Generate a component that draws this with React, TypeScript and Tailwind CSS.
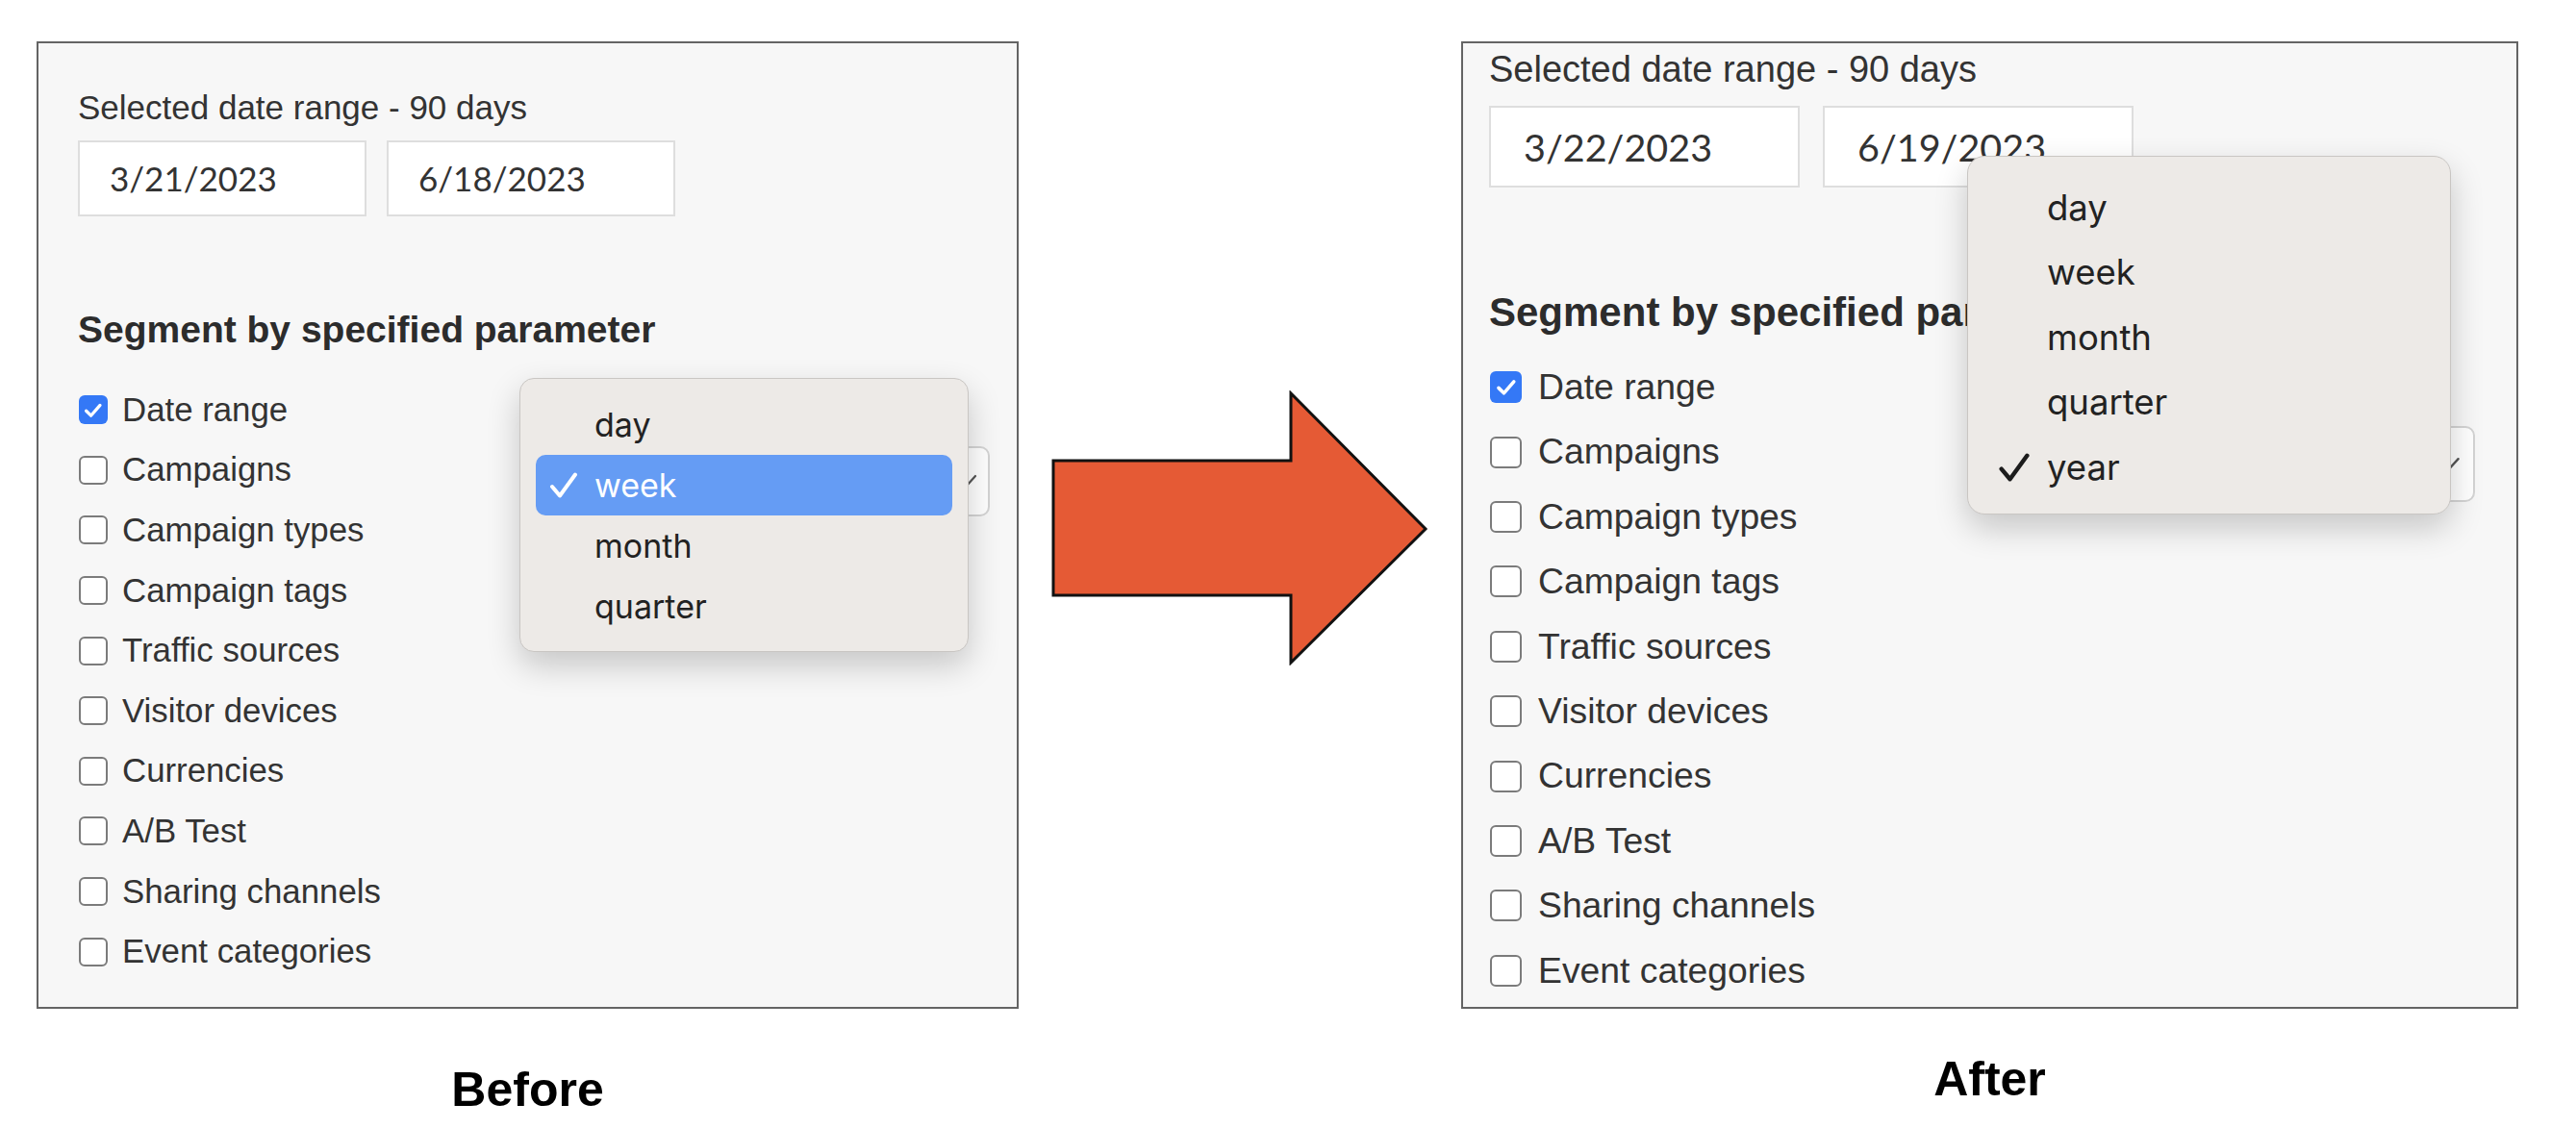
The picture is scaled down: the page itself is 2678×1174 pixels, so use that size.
import React from 'react';

type Variant = 'before' | 'after';

const PARAMS = [
  'Date range',
  'Campaigns',
  'Campaign types',
  'Campaign tags',
  'Traffic sources',
  'Visitor devices',
  'Currencies',
  'A/B Test',
  'Sharing channels',
  'Event categories',
];

// the two screenshots were taken at slightly different scales
const sizes = {
  before: {
    panel: 'w-[1021px] h-[1006px] pt-[49px] pl-[41px] pr-[28px]',
    caption: 'text-[35px]',
    dates: 'mt-[17px] gap-[21px]',
    dateBox: 'w-[300px] h-[79px] pl-[31px] text-[35px]',
    heading: 'mt-[98px] text-[39px]',
    list: 'mt-[33px]',
    row: 'h-[62.6px] gap-[15px] text-[34.8px]',
    box: 'w-[30px] h-[30px] ml-[1px]',
    select: 'mt-[69px] w-[420px] h-[73px]',
    chevron: 'mr-[11px] w-[22px] h-[15px]',
    menu: 'left-[500px] top-[348px] w-[467px] pt-[16px] pb-[15px] px-[16px] rounded-[15px]',
    item: 'h-[63px] pl-[14px] text-[34px] rounded-[10px]',
    tick: 'w-[47px]',
    tickSvg: 'w-[30px] h-[27px]',
  },
  after: {
    panel: 'w-[1099px] h-[1006px] pt-[8px] pl-[27px] pr-[43px]',
    caption: 'text-[38px]',
    dates: 'mt-[19px] gap-[24px]',
    dateBox: 'w-[323px] h-[85px] pl-[34px] text-[39.5px]',
    heading: 'mt-[109px] text-[42px]',
    list: 'mt-[23px]',
    row: 'h-[67.4px] gap-[17px] text-[37.3px]',
    box: 'w-[33px] h-[33px] ml-[1px]',
    select: 'mt-[74px] w-[440px] h-[79px]',
    chevron: 'mr-[13px] w-[24px] h-[16px]',
    menu: 'left-[524px] top-[117px] w-[503px] pt-[19px] pb-[14px] px-[17px] rounded-[18px]',
    item: 'h-[67.5px] pl-[14px] text-[36.5px] rounded-[10px]',
    tick: 'w-[51px]',
    tickSvg: 'w-[34px] h-[30px]',
  },
};

const CheckBox = ({ checked, className }: { checked: boolean; className: string }) =>
  checked ? (
    <span className={`${className} shrink-0 flex items-center justify-center rounded-[6px] bg-[#3478f6]`}>
      <svg viewBox="0 0 24 24" className="w-[72%] h-[72%]">
        <polyline points="4,12.5 9.5,18 20,6" fill="none" stroke="#fff" strokeWidth="3.6" strokeLinecap="round" strokeLinejoin="round" />
      </svg>
    </span>
  ) : (
    <span className={`${className} shrink-0 rounded-[6px] border-2 border-[#7b7b7b] bg-white`} />
  );

const Tick = ({ className, color }: { className: string; color: string }) => (
  <svg viewBox="0 0 30 27" className={className}>
    <polyline points="3,15 11,24.5 27,2.5" fill="none" stroke={color} strokeWidth="4" strokeLinecap="round" strokeLinejoin="round" />
  </svg>
);

interface PanelProps {
  variant: Variant;
  from: string;
  to: string;
  periods: string[];
  selected: string;
  highlight: boolean;
}

const Panel: React.FC<PanelProps> = ({ variant, from, to, periods, selected, highlight }) => {
  const s = sizes[variant];
  return (
    <div className={`relative shrink-0 border-2 border-[#646464] bg-[#f7f7f7] font-['Liberation_Sans',Arial,sans-serif] text-[#333] ${s.panel}`}>
      <p className={`leading-none ${s.caption}`}>Selected date range - 90 days</p>

      <div className={`flex ${s.dates}`}>
        {[from, to].map((d) => (
          <div key={d} className={`flex items-center border-2 border-[#dedede] bg-white font-['Lato',sans-serif] text-[#333] leading-none ${s.dateBox}`}>
            {d}
          </div>
        ))}
      </div>

      <h3 className={`font-bold leading-none text-[#2c2c2c] ${s.heading}`}>Segment by specified parameter</h3>

      <div className={`flex justify-between ${s.list}`}>
        <ul>
          {PARAMS.map((p, i) => (
            <li key={p} className={`flex items-center leading-none ${s.row}`}>
              <CheckBox checked={i === 0} className={s.box} />
              <span>{p}</span>
            </li>
          ))}
        </ul>

        {/* select sitting beside "Date range", mostly hidden by the open menu */}
        <div className={`self-start flex items-center justify-end rounded-[10px] border-2 border-[#d4d4d4] bg-white ${s.select}`}>
          <svg viewBox="0 0 22 15" className={s.chevron}>
            <polyline points="2,2 11,12 20,2" fill="none" stroke="#555" strokeWidth="2.2" strokeLinecap="round" strokeLinejoin="round" />
          </svg>
        </div>
      </div>

      {/* open native menu */}
      <div className={`absolute z-10 border border-[#c9c6c3] bg-[#edeae7] shadow-[0_14px_34px_rgba(0,0,0,0.2)] font-['Inter',sans-serif] text-[#222] ${s.menu}`}>
        {periods.map((p) => {
          const active = p === selected;
          const hi = active && highlight;
          return (
            <div key={p} className={`flex items-center leading-none ${s.item} ${hi ? 'bg-[#659cf4] text-white' : ''}`}>
              <span className={`flex items-center shrink-0 ${s.tick}`}>
                {active && <Tick className={s.tickSvg} color={hi ? '#ffffff' : '#1c1c1c'} />}
              </span>
              <span>{p}</span>
            </div>
          );
        })}
      </div>
    </div>
  );
};

export default function App() {
  return (
    <div className="w-[2678px] h-[1174px] bg-white overflow-hidden">
      <div className="flex pt-[43px] pl-[38px]">
        <div className="flex flex-col items-center">
          <Panel variant="before" from="3/21/2023" to="6/18/2023" periods={['day', 'week', 'month', 'quarter']} selected="week" highlight />
          <p className="mt-[59px] font-['Liberation_Sans',Arial,sans-serif] text-[50px] font-bold leading-none text-black">Before</p>
        </div>

        <div className="w-[460px] shrink-0">
          <svg width="394" height="286" viewBox="0 0 394 286" className="ml-[33px] mt-[363px]">
            <polygon points="3,73 250,73 250,3 390,144 250,283 250,213 3,213" fill="#e55a35" stroke="#111" strokeWidth="3" />
          </svg>
        </div>

        <div className="flex flex-col items-center">
          <Panel variant="after" from="3/22/2023" to="6/19/2023" periods={['day', 'week', 'month', 'quarter', 'year']} selected="year" highlight={false} />
          <p className="mt-[48px] font-['Liberation_Sans',Arial,sans-serif] text-[50px] font-bold leading-none text-black">After</p>
        </div>
      </div>
    </div>
  );
}
